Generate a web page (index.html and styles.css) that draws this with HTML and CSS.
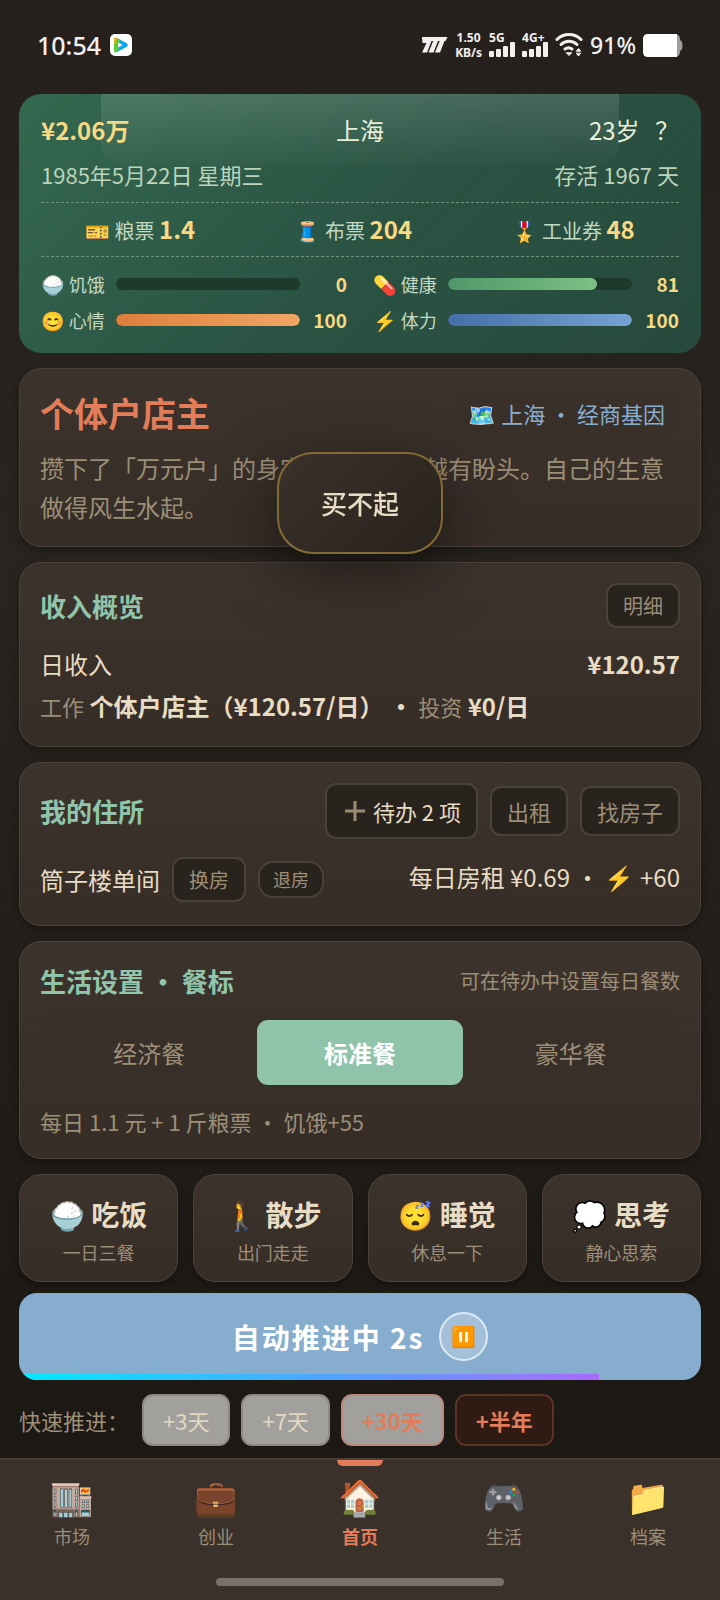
FILE: index.html
```html
<!DOCTYPE html>
<html lang="zh-CN">
<head>
  <meta charset="UTF-8">
  <meta name="viewport" content="width=device-width, initial-scale=1.0">
  <title>首页</title>
  <link rel="stylesheet" href="styles.css">
</head>
<body>
  <header class="status-bar">
    <div class="status-left">
      <span class="clock">10:54</span>
      <svg class="app-icon" width="22" height="22" viewBox="0 0 22 22">
        <rect width="22" height="22" rx="5" fill="#fff"/>
        <path d="M4 6q0-3 3-2l9.500 5q2.500 2 0 4l-9.500 5q-3 1-3-2z" fill="#12a8f0"/>
        <path d="M4 6q0-3 3-2l3 1.600-2 12-1 .4q-3 1-3-2z" fill="#5fcb2a"/>
        <path d="M4 10v-4q0-3 3-2l-1 4z" fill="#ffa51e"/>
        <path d="M8 8.500l4.500 2.500-4.500 2.500z" fill="#fff"/>
      </svg>
    </div>
    <div class="status-right">
      <svg width="28" height="16" viewBox="0 0 28 16" fill="#f2f0ee">
        <path d="M2 0h25.500l-2 4h-1l-4.500 11.500h-5l4.700-11.500h-1.700l-4.500 11.500h-5l4.700-11.500h-1.700l-4.500 11.500h-5l4.500-9.500h-4z"/>
      </svg>
      <span class="speed">1.50<br>KB/s</span>
      <span class="signal">
        <span class="signal-name">5G</span>
        <svg width="26" height="16" viewBox="0 0 26 16" fill="#f2f0ee">
          <rect x="0" y="10" width="5" height="6" rx="1"/><rect x="7" y="8" width="5" height="8" rx="1"/><rect x="14" y="5" width="5" height="11" rx="1"/><rect x="21" y="1" width="5" height="15" rx="1"/>
        </svg>
      </span>
      <span class="signal">
        <span class="signal-name">4G+</span>
        <svg width="26" height="16" viewBox="0 0 26 16" fill="#f2f0ee">
          <rect x="0" y="10" width="5" height="6" rx="1"/><rect x="7" y="8" width="5" height="8" rx="1"/><rect x="14" y="5" width="5" height="11" rx="1"/><rect x="21" y="1" width="5" height="15" rx="1"/>
        </svg>
      </span>
      <svg width="28" height="24" viewBox="0 0 28 24" fill="none" stroke="#f2f0ee" stroke-width="3" stroke-linecap="round">
        <path d="M2 6.500a17 17 0 0 1 24 0"/>
        <path d="M6 11.500a11.500 11.500 0 0 1 16 0"/>
        <path d="M10 16a6 6 0 0 1 7 0"/>
        <path d="M11.500 20l2.500 2.500 2.500-2.500z" stroke-width="1" fill="#f2f0ee"/>
        <path d="M21.500 18l2-2.500 2 2.500zM21.500 20.500l2 2.500 2-2.500z" stroke-width="1" fill="#f2f0ee"/>
      </svg>
      <span class="battery-text">91%</span>
      <svg width="40" height="23" viewBox="0 0 40 23">
        <path d="M30 0h1q6 0 6 5v1q2.500 1 2.500 5.500t-2.500 5.500v1q0 5-6 5h-1z" fill="#a09d99"/>
        <path d="M5 0h29v23h-29q-5 0-5-5v-13q0-5 5-5z" fill="#fff"/>
      </svg>
    </div>
  </header>

  <main class="content">
    <section class="hero">
      <div class="hero-row">
        <strong class="money">¥2.06万</strong>
        <span class="city">上海</span>
        <span class="age">23岁 <button class="help" type="button">？</button></span>
      </div>
      <div class="hero-date">
        <span>1985年5月22日 星期三</span>
        <span>存活 1967 天</span>
      </div>
      <div class="tickets">
        <span><span class="emoji">🎫</span> 粮票 <b>1.4</b></span>
        <span><span class="emoji">🧵</span> 布票 <b>204</b></span>
        <span><span class="emoji">🎖️</span> 工业券 <b>48</b></span>
      </div>
      <div class="stats">
        <div class="stat"><span class="stat-name"><span class="emoji">🍚</span> 饥饿</span><div class="bar"></div><b>0</b></div>
        <div class="stat"><span class="stat-name"><span class="emoji">💊</span> 健康</span><div class="bar"><div class="fill green" style="width: 81%"></div></div><b>81</b></div>
        <div class="stat"><span class="stat-name"><span class="emoji">😊</span> 心情</span><div class="bar"><div class="fill orange" style="width: 100%"></div></div><b>100</b></div>
        <div class="stat"><span class="stat-name"><span class="emoji">⚡</span> 体力</span><div class="bar"><div class="fill blue" style="width: 100%"></div></div><b>100</b></div>
      </div>
    </section>

    <section class="card">
      <div class="card-head job-head">
        <h1 class="job">个体户店主</h1>
        <span class="origin"><span class="emoji">🗺️</span> 上海 · 经商基因</span>
      </div>
      <p class="story">攒下了「万元户」的身家，日子越过越有盼头。自己的生意做得风生水起。</p>
    </section>

    <section class="card">
      <div class="card-head">
        <h2>收入概览</h2>
        <button class="btn small" type="button">明细</button>
      </div>
      <div class="row">
        <span>日收入</span>
        <b>¥120.57</b>
      </div>
      <div class="row-text"><span class="muted">工作</span> <b>个体户店主（¥120.57/日） ·</b> <span class="muted">投资</span> <b>¥0/日</b></div>
    </section>

    <section class="card home">
      <div class="card-head">
        <h2>我的住所</h2>
        <div class="btns">
          <button class="btn todo" type="button"><svg width="20" height="20" viewBox="0 0 20 20" stroke="#998b74" stroke-width="3"><path d="M10 0v20M0 10h20"/></svg>待办 2 项</button>
          <button class="btn" type="button">出租</button>
          <button class="btn" type="button">找房子</button>
        </div>
      </div>
      <div class="row">
        <div class="btns">
          <span>筒子楼单间</span>
          <button class="btn small" type="button">换房</button>
          <button class="btn tiny" type="button">退房</button>
        </div>
        <span>每日房租 ¥0.69 · <span class="emoji">⚡</span> +60</span>
      </div>
    </section>

    <section class="card">
      <div class="card-head meal-head">
        <h2>生活设置 · 餐标</h2>
        <span class="hint">可在待办中设置每日餐数</span>
      </div>
      <div class="meals">
        <button class="meal" type="button">经济餐</button>
        <button class="meal active" type="button">标准餐</button>
        <button class="meal" type="button">豪华餐</button>
      </div>
      <p class="meal-note">每日 1.1 元 + 1 斤粮票 · 饥饿+55</p>
    </section>

    <div class="actions">
      <button class="action" type="button"><b><span class="emoji">🍚</span> 吃饭</b><small>一日三餐</small></button>
      <button class="action" type="button"><b><span class="emoji">🚶</span> 散步</b><small>出门走走</small></button>
      <button class="action" type="button"><b><span class="emoji">😴</span> 睡觉</b><small>休息一下</small></button>
      <button class="action" type="button"><b><span class="emoji">💭</span> 思考</b><small>静心思索</small></button>
    </div>

    <button class="auto" type="button">
      <span>自动推进中 2s</span>
      <span class="pause emoji">⏸️</span>
      <span class="auto-progress" style="width: 85%"></span>
    </button>

    <div class="quick">
      <span class="quick-label">快速推进：</span>
      <button class="skip" type="button">+3天</button>
      <button class="skip" type="button">+7天</button>
      <button class="skip month" type="button">+30天</button>
      <button class="skip half" type="button">+半年</button>
    </div>
  </main>

  <nav class="tabs">
    <a class="tab" href="#"><span class="emoji">🏬</span>市场</a>
    <a class="tab" href="#"><span class="emoji">💼</span>创业</a>
    <a class="tab current" href="#"><span class="emoji">🏠</span>首页</a>
    <a class="tab" href="#"><span class="emoji">🎮</span>生活</a>
    <a class="tab" href="#"><span class="emoji">📁</span>档案</a>
  </nav>

  <div class="toast" role="status">买不起</div>
</body>
</html>
```
FILE: styles.css
```css
* {
  box-sizing: border-box;
}
body {
  margin: 0;
  min-height: 100vh;
  display: flex;
  flex-direction: column;
  background: linear-gradient(#25201b, #29241f 35%, #1c1814 90%);
  color: #e8dcc4;
  font-family: "Noto Sans CJK SC", "Noto Color Emoji", sans-serif;
  font-size: 24px;
  line-height: 39px;
}
button {
  font-family: inherit;
  color: inherit;
  cursor: pointer;
}
h1, h2, p {
  margin: 0;
}
.emoji {
  font-family: "Noto Color Emoji", "Noto Sans CJK SC", sans-serif;
  line-height: 1;
}

/* phone status bar */
.status-bar {
  height: 94px;
  padding: 0 37px;
  display: flex;
  align-items: center;
  justify-content: space-between;
  color: #f2f0ee;
  font-family: "Noto Sans", sans-serif;
  font-weight: 500;
}
.status-left, .status-right {
  display: flex;
  align-items: center;
  gap: 9px;
  padding-bottom: 4px;
}
.status-right {
  gap: 7px;
}
.clock {
  font-size: 25px;
}
.battery-text {
  font-size: 23px;
}
.speed {
  font-size: 12px;
  line-height: 15px;
  font-weight: 700;
  text-align: center;
}
.signal {
  display: flex;
  flex-direction: column;
  line-height: 8px;
  font-weight: 700;
  font-size: 12px;
}
.signal svg {
  margin-top: -1px;
}

.content {
  flex: 1;
  padding: 0 19px 12px;
}

/* green summary card */
.hero {
  position: relative;
  padding: 16px 22px 18px;
  border-radius: 22px;
  background: linear-gradient(135deg, #34684f, #2a5243 55%, #264a3d);
  color: #e9efd8;
  margin-bottom: 15px;
}
.hero::before {
  content: "";
  position: absolute;
  top: 0;
  left: 12%;
  right: 12%;
  height: 72px;
  border-radius: 0 0 22px 22px;
  background: linear-gradient(rgba(255, 255, 255, 0.13), rgba(255, 255, 255, 0.01));
}
.hero b, .money {
  color: #f8d983;
}
.hero-row {
  position: relative;
  display: grid;
  grid-template-columns: 1fr auto 1fr;
}
.age {
  justify-self: end;
}
.help {
  margin-left: 10px;
  border: 0;
  padding: 0;
  background: none;
  font-size: 24px;
  line-height: 39px;
}
.hero-date {
  display: flex;
  justify-content: space-between;
  font-size: 22px;
  line-height: 36px;
  margin: 7px 0 10px;
  color: #bcd3b9;
}
.tickets {
  display: flex;
  justify-content: space-around;
  gap: 12px;
  padding: 6px 0;
  border-top: 1px dashed #6f9480;
  border-bottom: 1px dashed #6f9480;
  font-size: 20px;
  color: #c4d9c2;
}
.tickets b {
  font-size: 24px;
}
.stats {
  display: grid;
  grid-template-columns: 1fr 1fr;
  column-gap: 26px;
  row-gap: 6px;
  margin-top: 12px;
}
.stat {
  display: flex;
  align-items: center;
  line-height: 30px;
  font-size: 18px;
  color: #c4d9c2;
}
.stat .emoji {
  font-size: 19px;
}
.stat-name {
  width: 75px;
  white-space: nowrap;
}
.stat b {
  width: 47px;
  text-align: right;
  font-size: 19px;
}
.bar {
  flex: 1;
  height: 12px;
  border-radius: 6px;
  background: #1d3a2d;
  overflow: hidden;
}
.fill {
  height: 100%;
  border-radius: 6px;
}
.green {
  background: linear-gradient(90deg, #4f9769, #7cc084);
}
.orange {
  background: linear-gradient(90deg, #dd7f3c, #f0a662);
}
.blue {
  background: linear-gradient(90deg, #456fa6, #76a3d3);
}

/* cards */
.card {
  padding: 20px;
  border: 1px solid #4b433b;
  border-radius: 22px;
  background: linear-gradient(#3c332d, #372d27);
  box-shadow: 0 4px 10px rgba(0, 0, 0, 0.3);
  margin-bottom: 15px;
}
.card-head, .row {
  display: flex;
  align-items: center;
  justify-content: space-between;
}
.card-head {
  margin-bottom: 16px;
}
.card h2 {
  font-size: 26px;
  line-height: 38px;
  color: #8fc5aa;
}
.job-head {
  margin-bottom: 11px;
}
.job {
  font-size: 34px;
  line-height: 48px;
  color: #e37c58;
}
.origin {
  padding: 2px 15px;
  border-radius: 10px;
  background: #39302a;
  color: #88aecf;
  font-size: 22px;
}
.story {
  color: #9c8e77;
}
.row-text {
  margin-top: 3px;
}
.muted {
  color: #9c8e77;
  font-size: 22px;
}
.btns {
  display: flex;
  align-items: center;
  gap: 12px;
}
.btn {
  padding: 7px 15px;
  border: 2px solid #49413a;
  border-radius: 11px;
  background: #29231d;
  color: #9c8e77;
  font-size: 22px;
  line-height: 32px;
}
.btn.todo {
  display: flex;
  align-items: center;
  gap: 8px;
  padding: 10px 15px 10px 18px;
  color: #e8dcc4;
}
.btn.small {
  padding: 5px 15px;
  font-size: 20px;
  line-height: 31px;
}
.btn.tiny {
  padding: 2px 13px;
  border-radius: 15px;
  font-size: 18px;
  line-height: 29px;
}
.home .card-head {
  margin-bottom: 18px;
}
.home .row {
  align-items: flex-start;
  margin-bottom: 3px;
}

/* meal plan */
.meal-head {
  margin-bottom: 14px;
}
.hint {
  color: #9c8e77;
  font-size: 20px;
  line-height: 38px;
}
.meals {
  display: grid;
  grid-template-columns: repeat(3, 1fr);
  gap: 4px;
  padding: 6px;
  border-radius: 12px;
  background: #392f29;
}
.meal {
  padding: 13px 0;
  border: 0;
  border-radius: 11px;
  background: none;
  color: #9c8e77;
  font-size: 24px;
  line-height: 39px;
}
.meal.active {
  background: #8fc4aa;
  color: #fff;
  font-weight: 700;
}
.meal-note {
  margin-top: 14px;
  font-size: 22px;
  line-height: 33px;
  color: #9c8e77;
}

/* daily actions */
.actions {
  display: grid;
  grid-template-columns: repeat(4, 1fr);
  gap: 15px;
}
.action {
  display: flex;
  flex-direction: column;
  align-items: center;
  padding: 17px 0 13px;
  border: 1px solid #4b433b;
  border-radius: 22px;
  background: linear-gradient(#3c332d, #372d27);
  box-shadow: 0 4px 10px rgba(0, 0, 0, 0.3);
}
.action b {
  font-size: 28px;
  line-height: 45px;
}
.action small {
  font-size: 18px;
  line-height: 31px;
  color: #9c8e77;
}
.auto {
  position: relative;
  display: flex;
  align-items: center;
  justify-content: center;
  gap: 15px;
  width: 100%;
  margin-top: 11px;
  padding: 19px;
  border: 0;
  border-radius: 18px;
  overflow: hidden;
  background: #86adce;
  color: #fff;
  font-size: 28px;
  font-weight: 700;
  letter-spacing: 2px;
}
.pause {
  display: flex;
  align-items: center;
  justify-content: center;
  width: 49px;
  height: 49px;
  border: 2px solid #dde9f3;
  border-radius: 50%;
  background: #a4bfd8;
  font-size: 20px;
  letter-spacing: 0;
}
.auto-progress {
  position: absolute;
  left: 0;
  bottom: 0;
  height: 6px;
  background: linear-gradient(90deg, #00eaff, #5b9cff 60%, #a96bff);
}
.quick {
  display: flex;
  align-items: center;
  gap: 11px;
  margin-top: 14px;
}
.quick-label {
  font-size: 22px;
  color: #9c8e77;
  margin-right: 2px;
}
.skip {
  padding: 8px 19px;
  border: 2px solid #8d8984;
  border-radius: 11px;
  background: #a2a09d;
  color: #e2d8c1;
  font-size: 22px;
  line-height: 32px;
}
.month {
  border-color: #b98a7c;
  color: #e37c58;
  font-weight: 700;
}
.half {
  border-color: #5c3226;
  background: #2f1b14;
  color: #e37c58;
  font-weight: 700;
}

/* bottom tab bar */
.tabs {
  position: relative;
  display: grid;
  grid-template-columns: repeat(5, 1fr);
  height: 142px;
  border-top: 2px solid #49413a;
  background: #3a312b;
}
.tabs::after {
  content: "";
  position: absolute;
  left: 30%;
  right: 30%;
  bottom: 14px;
  height: 8px;
  border-radius: 4px;
  background: #787069;
}
.tab {
  position: relative;
  display: flex;
  flex-direction: column;
  align-items: center;
  padding-top: 16px;
  color: #9c8e77;
  font-size: 18px;
  line-height: 28px;
  text-decoration: none;
}
.tab .emoji {
  font-size: 35px;
  line-height: 46px;
}
.current {
  color: #e37c58;
  font-weight: 700;
}
.current::before {
  content: "";
  position: absolute;
  top: 0;
  width: 46px;
  height: 6px;
  border-radius: 0 0 6px 6px;
  background: #e37c58;
}

.toast {
  position: fixed;
  top: 452px;
  left: 50%;
  transform: translateX(-50%);
  padding: 29px 42px 30px;
  border: 2px solid #846b35;
  border-radius: 36px;
  background: linear-gradient(135deg, #3a312a, #29231d);
  box-shadow: 0 16px 60px rgba(0, 0, 0, 0.5);
  font-size: 26px;
  font-weight: 500;
  white-space: nowrap;
}
```
